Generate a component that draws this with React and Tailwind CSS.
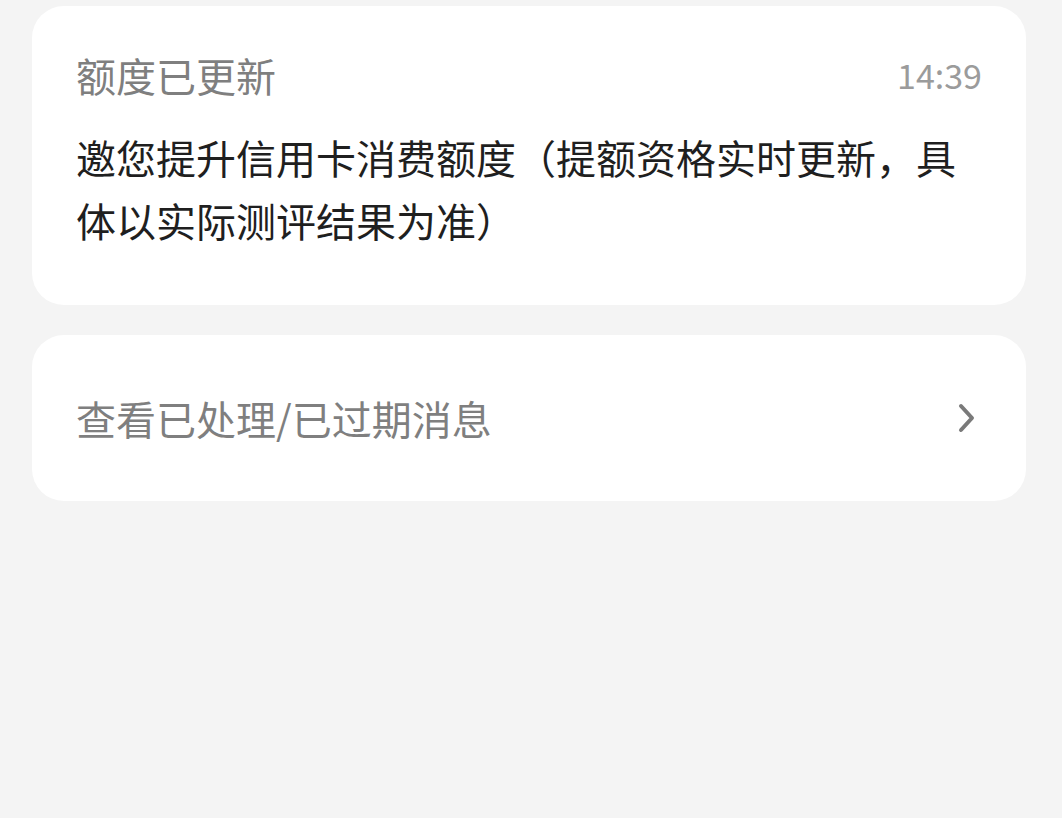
import React from 'react';

function Chevron() {
  return (
    <svg width="24" height="34" viewBox="0 0 24 34" fill="none">
      <path d="M6 5 L17 17 L6 29" stroke="#7a7a7a" strokeWidth="4" strokeLinecap="round" strokeLinejoin="round" />
    </svg>
  );
}

export default function App() {
  return (
    <div className="min-h-[818px] w-full bg-[#f4f4f4] pl-[32px] pr-[36px] pt-[6px] font-['Noto_Sans_CJK_SC',sans-serif]">
      <div className="rounded-[32px] bg-white pl-[44px] pr-[44px] pt-[41px] pb-[53px]">
        <div className="flex items-center justify-between">
          <span className="text-[40px] leading-[56px] text-[#7f7f7f]">额度已更新</span>
          <span className="text-[34px] leading-[56px] text-[#9b9b9b]">14:39</span>
        </div>
        <p className="mt-[23px] text-[40px] leading-[63px] text-[#1f1f1f]">
          邀您提升信用卡消费额度（提额资格实时更新，具体以实际测评结果为准）
        </p>
      </div>

      <div className="mt-[30px] flex h-[166px] items-center justify-between rounded-[32px] bg-white pl-[44px] pr-[47px]">
        <span className="text-[40px] leading-[56px] text-[#7f7f7f]">查看已处理/已过期消息</span>
        <Chevron />
      </div>
    </div>
  );
}
